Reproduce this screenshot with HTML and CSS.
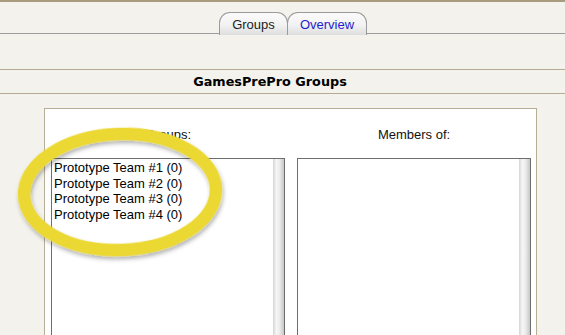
FILE: index.html
```html
<!DOCTYPE html>
<html lang="en">
<head>
    <meta charset="UTF-8">
    <title>GamesPrePro Groups</title>
    <link rel="stylesheet" href="styles.css">
</head>
<body>
    <div class="tabbar">
        <div class="tab tab-active">Groups</div>
        <div class="tab tab-link">Overview</div>
    </div>

    <div class="title-bar">GamesPrePro Groups</div>

    <div class="panel">
        <div class="column">
            <div class="column-label">Groups:</div>
            <div class="listbox">
                <div class="list-items">
                    <div>Prototype Team #1 (0)</div>
                    <div>Prototype Team #2 (0)</div>
                    <div>Prototype Team #3 (0)</div>
                    <div>Prototype Team #4 (0)</div>
                </div>
                <div class="scroll-track"></div>
            </div>
        </div>
        <div class="column">
            <div class="column-label">Members of:</div>
            <div class="listbox">
                <div class="list-items"></div>
                <div class="scroll-track"></div>
            </div>
        </div>
    </div>

    <!-- highlight marker drawn over the group list -->
    <svg class="highlight" width="240" height="170" viewBox="0 0 240 170">
        <defs>
            <filter id="shade" x="-10%" y="-10%" width="120%" height="130%">
                <feDropShadow dx="1" dy="3" stdDeviation="2" flood-color="#000" flood-opacity="0.3"/>
            </filter>
        </defs>
        <ellipse cx="110" cy="77" rx="96" ry="58" fill="none" stroke="#ecd832" stroke-width="12.5" transform="rotate(-2 110 77)" filter="url(#shade)"/>
    </svg>
</body>
</html>
```

FILE: styles.css
```css
* {
    margin: 0;
    padding: 0;
    box-sizing: border-box;
}

body {
    font-family: "Liberation Sans", Arial, sans-serif;
    font-size: 13px;
    color: #111;
    background: #f3f2ec;
    border-top: 2px solid #a99b7e;
    height: 100vh;
    overflow: hidden;
    position: relative;
}

.tabbar {
    height: 32px;
    border-bottom: 1px solid #9c9c9c;
    display: flex;
    align-items: flex-end;
    padding-left: 219px;
}

.tab {
    height: 23px;
    margin-bottom: -2px;
    border: 1px solid #9a9a9a;
    border-bottom: none;
    border-radius: 11px 11px 0 0;
    background: linear-gradient(#fbfbfb 0%, #f2f2f2 55%, #dedede 100%);
    text-align: center;
    line-height: 20px;
    padding-top: 2px;
}

.tab-active {
    width: 69px;
    color: #1c1c1c;
}

.tab-link {
    width: 80px;
    margin-left: -1px;
    color: #1d1dcc;
}

.title-bar {
    margin-top: 35px;
    height: 25px;
    border-top: 1px solid #b5ab92;
    border-bottom: 1px solid #b5ab92;
    text-align: center;
    padding-right: 25px;
    font-family: "DejaVu Sans", Verdana, sans-serif;
    font-weight: bold;
    font-size: 12.8px;
    line-height: 23px;
    color: #000;
}

.panel {
    margin: 14px 0 0 44px;
    width: 493px;
    height: 230px;
    background: #fff;
    border: 1px solid #b8ae96;
    border-bottom: none;
    padding: 18px 5px 0 6px;
    display: flex;
    gap: 12px;
}

.column {
    width: 234px;
}

.column-label {
    text-align: center;
    line-height: 16px;
    margin-bottom: 15px;
    color: #111;
}

.listbox {
    height: 180px;
    border: 1px solid #6e6e6e;
    border-bottom: none;
    display: flex;
}

.list-items {
    flex: 1;
    padding: 1px 0 0 2px;
    line-height: 15.67px;
    color: #000;
}

.scroll-track {
    width: 11px;
    background: linear-gradient(to right, #d4d4d4 0%, #f6f6f6 30%, #ececec 60%, #c6c6c6 100%);
}

.highlight {
    position: absolute;
    left: 10px;
    top: 113px;
}
```
